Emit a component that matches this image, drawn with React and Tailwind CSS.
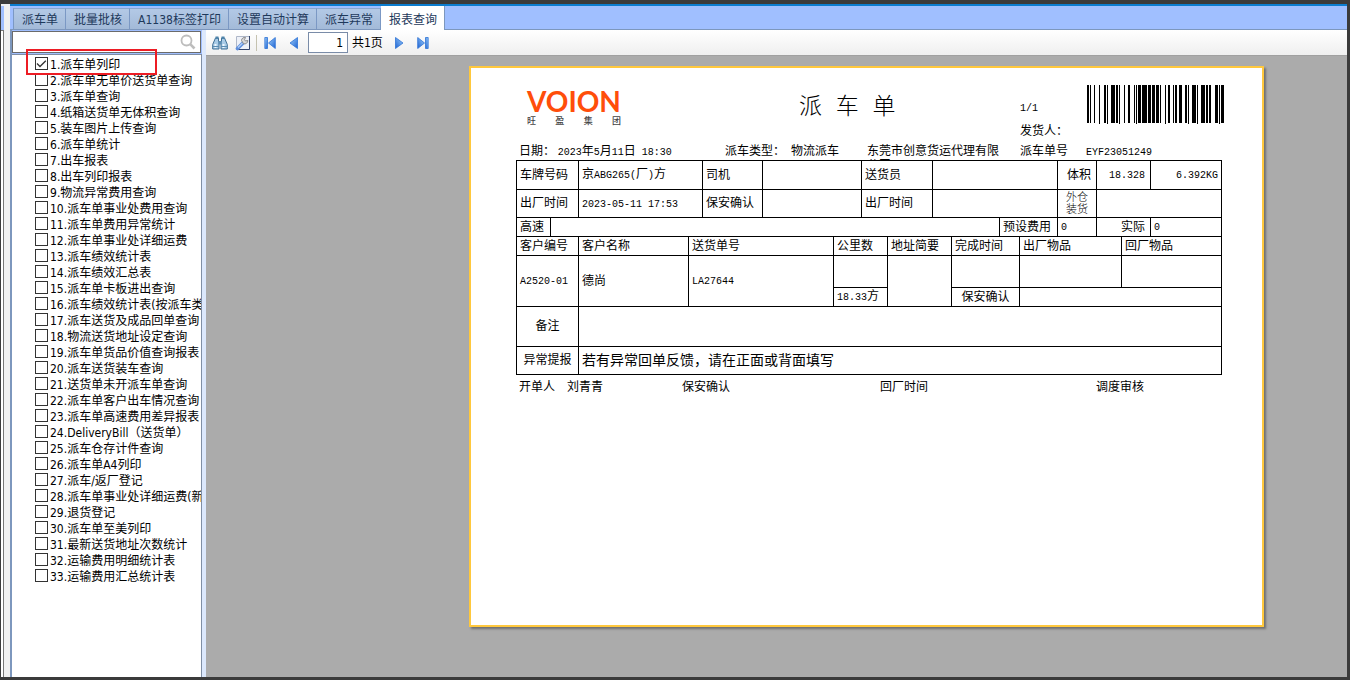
import { useState } from 'react';

const tabs = ['派车单', '批量批核', 'A1138标签打印', '设置自动计算', '派车异常', '报表查询'];

const reports = [
  '派车单列印',
  '派车单无单价送货单查询',
  '派车单查询',
  '纸箱送货单无体积查询',
  '装车图片上传查询',
  '派车单统计',
  '出车报表',
  '出车列印报表',
  '物流异常费用查询',
  '派车单事业处费用查询',
  '派车单费用异常统计',
  '派车单事业处详细运费',
  '派车绩效统计表',
  '派车绩效汇总表',
  '派车单卡板进出查询',
  '派车绩效统计表(按派车类型)',
  '派车送货及成品回单查询',
  '物流送货地址设定查询',
  '派车单货品价值查询报表',
  '派车送货装车查询',
  '送货单未开派车单查询',
  '派车单客户出车情况查询',
  '派车单高速费用差异报表',
  'DeliveryBill（送货单）',
  '派车仓存计件查询',
  '派车单A4列印',
  '派车/返厂登记',
  '派车单事业处详细运费(新)',
  '退货登记',
  '派车单至美列印',
  '最新送货地址次数统计',
  '运输费用明细统计表',
  '运输费用汇总统计表',
];

// [x, width, long]
const bars = [
  [0, 2], [3, 1], [7, 1], [12, 1, 1], [17, 2], [20, 1, 1], [24, 4], [29, 2], [32, 1, 1],
  [37, 1], [41, 2], [47, 1], [49, 1, 1], [51, 3], [55, 5], [61, 3], [65, 3], [69, 3], [73, 1],
  [78, 1, 1], [81, 2], [86, 1], [88, 2], [92, 3], [98, 2], [101, 1, 1], [105, 4], [110, 1, 1],
  [114, 4], [119, 2], [122, 2], [128, 3], [132, 1, 1], [134, 3],
];

const Barcode = () => (
  <svg width="137" height="39" viewBox="0 0 137 39" shapeRendering="crispEdges" aria-hidden="true">
    {bars.map(([x, w, long]) => (
      <rect key={x} x={x} y="0" width={w} height={long ? 39 : 38} />
    ))}
  </svg>
);

const FindIcon = () => (
  <svg width="16" height="16" viewBox="0 0 16 16" aria-hidden="true">
    <path d="M3.5 3h3v3l.5 1v7H.7V9.500z" fill="#a9cbe6" stroke="#3f6f95" />
    <path d="M12.500 3h-3v3L9 7v7h6.300V9.500z" fill="#a9cbe6" stroke="#3f6f95" />
    <path d="M3.500 1.500h3V4h-3zM9.500 1.500h3V4h-3z" fill="#4f83aa" />
    <path d="M6.500 6h3v3.500h-3z" fill="#5c8db2" />
    <path d="M2.500 9h2v4h-2zM10.500 9h2v4h-2z" fill="#eef7fd" />
    <path d="M.7 11.500h6.300M9 11.500h6.300" stroke="#5c8db2" />
  </svg>
);

const SetupIcon = () => (
  <svg width="16" height="16" viewBox="0 0 16 16" aria-hidden="true">
    <path d="M1.500 1.500h13v13h-13z" fill="#eef1f8" stroke="#aeb7c8" />
    <path d="M14.500 1v13.500H3" fill="none" stroke="#34456d" />
    <path d="M8 8L2.500 13.500" stroke="#5f8fdc" strokeWidth="3.600" strokeLinecap="round" />
    <path d="M7.500 8L3 12.500" stroke="#b5d0f8" strokeWidth="1.200" />
    <path d="M6.500 5.500a3.200 3.200 0 0 1 4-3l-1 2.200 1 1.300 2.300-.6a3.200 3.200 0 0 1-4.300 3.300z" fill="#d8d8d8" stroke="#858585" strokeWidth=".9" />
  </svg>
);

const SearchIcon = () => (
  <svg width="16" height="16" viewBox="0 0 16 16" fill="none" stroke="#bdbdbd" aria-hidden="true">
    <circle cx="6.500" cy="6.500" r="5" strokeWidth="1.800" />
    <path d="M10.200 10.200L14.500 14.500" strokeWidth="2.600" />
  </svg>
);

// Navigation arrow, with a stop bar for the first / last page
const Arrow = ({ bar, flip }) => (
  <svg width="12" height="12" viewBox="0 0 12 12" className={flip ? '-scale-x-100' : ''} aria-hidden="true">
    <defs>
      <linearGradient id="arrow" x1="0" y1="0" x2="1" y2="1">
        <stop offset="0" stopColor="#9fd0fb" />
        <stop offset="1" stopColor="#1d62d2" />
      </linearGradient>
    </defs>
    {bar && <path d="M.8.500h2.700v11H.8z" fill="url(#arrow)" stroke="#2f74d6" strokeWidth=".8" />}
    <path d={bar ? 'M11.300.5v11L4.500 6z' : 'M9.500.5v11L2 6z'} fill="url(#arrow)" stroke="#2f74d6" strokeWidth=".8" />
  </svg>
);

// Half-width characters of the report
const N = ({ children }) => <span className="font-['Liberation_Mono',monospace] text-[10px] leading-none">{children}</span>;

const Td = ({ className = '', children, ...rest }) => (
  <td className={`border-r border-b border-black px-[3px] pt-0 pb-[3px] whitespace-nowrap ${className}`} {...rest}>
    {children}
  </td>
);

const Th = ({ children }) => (
  <th className="h-[19px] border-r border-b border-black px-[3px] pt-0 pb-[3px] text-left font-normal whitespace-nowrap">{children}</th>
);

const Cols = ({ widths }) => (
  <colgroup>
    {widths.map((w, i) => (
      <col key={i} style={{ width: w }} />
    ))}
  </colgroup>
);

const tableClass = 'w-full table-fixed border-separate border-spacing-0 border-l border-black';

function Report() {
  return (
    <article className="min-h-[561px] w-[795px] shrink-0 border-2 border-[#ffc83d] bg-white pr-[40px] pl-[45px] font-['Noto_Sans_CJK_SC',sans-serif] text-xs leading-[14px] text-black shadow-[2px_2px_2px_#707070]">
      <header className="grid h-[75px] grid-cols-[283px_221px_67px_1fr] pt-[17px]">
        <div className="ml-[11px] w-[94px] pt-px">
          <div className="font-['Lato',sans-serif] text-[28px] leading-[30px] font-bold text-[#ff4e0a]">VOION</div>
          <div className="flex justify-between text-[9px] leading-[10px] font-medium text-[#444]">
            <span>旺</span>
            <span>盈</span>
            <span>集</span>
            <span>团</span>
          </div>
        </div>
        <h1 className="pt-[9px] font-['Liberation_Mono','Noto_Sans_CJK_SC',monospace] text-[23px] leading-7 font-light">派 车 单</h1>
        <div className="flex flex-col gap-[9px] pt-[14px]">
          <span><N>1/1</N></span>
          <span>发货人：</span>
        </div>
        <Barcode />
      </header>

      <div className="grid h-[17px] grid-cols-[206px_66px_76px_153px_66px_1fr] items-baseline overflow-hidden pl-[3px]">
        <span>
          日期： <N>2023</N>年<N>5</N>月<N>11</N>日<N> 18:30</N>
        </span>
        <span>派车类型：</span>
        <span>物流派车</span>
        <span className="w-[140px]">东莞市创意货运代理有限公司</span>
        <span>派车单号</span>
        <span><N>EYF23051249</N></span>
      </div>

      <table className={`${tableClass} border-t`}>
        <Cols widths={[62, 124, 60, 99, 71, 125, 39, 54, 71]} />
        <tbody>
          <tr>
            <Td className="h-[29px]">车牌号码</Td>
            <Td>京<N>ABG265(</N>厂<N>)</N>方</Td>
            <Td>司机</Td>
            <Td />
            <Td>送货员</Td>
            <Td />
            <Td className="pr-[5px] text-right">体积</Td>
            <Td className="pr-[5px] text-right"><N>18.328</N></Td>
            <Td className="text-right"><N>6.392KG</N></Td>
          </tr>
          <tr>
            <Td className="h-[28px]">出厂时间</Td>
            <Td><N>2023-05-11 17:53</N></Td>
            <Td>保安确认</Td>
            <Td />
            <Td>出厂时间</Td>
            <Td />
            <Td className="text-center text-[11px] leading-[12px] font-light">外仓<br />装货</Td>
            <Td colSpan={2} />
          </tr>
        </tbody>
      </table>

      <table className={tableClass}>
        <Cols widths={[34, 449, 58, 39, 54, 71]} />
        <tbody>
          <tr>
            <Td className="h-[19px]">高速</Td>
            <Td />
            <Td>预设费用</Td>
            <Td><N>0</N></Td>
            <Td className="pr-[5px] text-right">实际</Td>
            <Td><N>0</N></Td>
          </tr>
        </tbody>
      </table>

      <table className={tableClass}>
        <Cols widths={[62, 110, 145, 54, 64, 68, 102, 100]} />
        <thead>
          <tr>
            <Th>客户编号</Th>
            <Th>客户名称</Th>
            <Th>送货单号</Th>
            <Th>公里数</Th>
            <Th>地址简要</Th>
            <Th>完成时间</Th>
            <Th>出厂物品</Th>
            <Th>回厂物品</Th>
          </tr>
        </thead>
        <tbody>
          <tr>
            <Td rowSpan={2}><N>A2520-01</N></Td>
            <Td rowSpan={2}>德尚</Td>
            <Td rowSpan={2}><N>LA27644</N></Td>
            <Td className="h-[32px]" />
            <Td rowSpan={2} />
            <Td />
            <Td />
            <Td />
          </tr>
          <tr>
            <Td className="h-[19px]"><N>18.33</N>方</Td>
            <Td className="text-center">保安确认</Td>
            <Td colSpan={2} />
          </tr>
          <tr>
            <Td className="h-[40px] text-center">备注</Td>
            <Td colSpan={7} />
          </tr>
          <tr>
            <Td className="h-[28px] text-center">异常提报</Td>
            <Td colSpan={7} className="text-[14px] leading-[18px]">若有异常回单反馈，请在正面或背面填写</Td>
          </tr>
        </tbody>
      </table>

      <footer className="grid grid-cols-[48px_115px_198px_216px_1fr] pt-1 pl-[3px]">
        <span>开单人</span>
        <span>刘青青</span>
        <span>保安确认</span>
        <span>回厂时间</span>
        <span>调度审核</span>
      </footer>
    </article>
  );
}

export default function App() {
  const [activeTab, setActiveTab] = useState('报表查询');
  const [checked, setChecked] = useState([0]);
  const [page, setPage] = useState('1');

  const toggle = (i) => {
    setChecked(checked.includes(i) ? checked.filter((c) => c !== i) : [...checked, i]);
  };

  return (
    <div className="flex h-screen overflow-hidden border-t-4 border-r-3 border-b-3 border-l border-[#3b3b3b] bg-[#f0f0f0] font-['DejaVu_Sans_Condensed','Noto_Sans_CJK_SC',sans-serif] text-xs text-black">
      {/* edge of the docked panel */}
      <div className="mt-[2px] flex w-[9px] flex-col">
        <div className="h-6 w-[3px] bg-[#a0bfff]" />
        <div className="w-[3px] flex-1 border-t border-r border-[#777] bg-white" />
      </div>

      <div className="flex min-w-0 flex-1 flex-col border-t-2 border-[#0b7dd0] bg-[#a0bfff]">
        <nav className="flex h-6 shrink-0 items-end border-b border-[#7d97bd] pl-[3px]">
          {tabs.map((tab, i) => (
            <button
              key={tab}
              onClick={() => setActiveTab(tab)}
              className={`border-r pr-[7px] pl-2 whitespace-nowrap text-[#1e395b] ${i === 0 ? 'border-l' : ''} ${
                tab === activeTab
                  ? '-mb-px h-6 border-[#7d97bd] bg-white pt-[3px]'
                  : 'h-[21px] border-t border-[#7b98c4] border-t-[#8aa6cf] bg-linear-to-b from-[#b3c9e6] to-[#a3bad8] pt-px'
              }`}
            >
              {tab}
            </button>
          ))}
        </nav>

        <div className="flex min-h-0 flex-1">
          <aside className="relative flex w-[196px] shrink-0 flex-col border-r-4 border-l-2 border-r-[#dce8fc] border-l-[#7d97bd]">
            <div className="mt-px mr-px flex h-[22px] shrink-0 items-center border border-[#6b6b6b] bg-white pr-1">
              <input type="search" aria-label="查询" className="min-w-0 flex-1 px-1 outline-none" />
              <button aria-label="查询"><SearchIcon /></button>
            </div>
            <ul className="mt-px flex-1 overflow-hidden border-t border-r border-[#7f8ea5] bg-white pt-px pl-[23px]">
              {reports.map((name, i) => (
                <li key={name} className="h-4">
                  <label className="flex h-4 items-start gap-[2px] whitespace-nowrap">
                    <span className="relative mt-px flex h-[13px] w-[13px] shrink-0">
                      <input
                        type="checkbox"
                        checked={checked.includes(i)}
                        onChange={() => toggle(i)}
                        className="h-[13px] w-[13px] appearance-none border border-[#333] bg-white"
                      />
                      {checked.includes(i) && (
                        <svg className="pointer-events-none absolute inset-0" width="13" height="13" viewBox="0 0 13 13" fill="none" aria-hidden="true">
                          <path d="M2 6.500l3 3 5.800-5.800" stroke="#333" strokeWidth="1.300" />
                        </svg>
                      )}
                    </span>
                    <span className="pt-px leading-4">{i + 1}.{name}</span>
                  </label>
                </li>
              ))}
            </ul>
            <div className="pointer-events-none absolute top-[19px] left-[14px] h-[26px] w-[131px] border-2 border-[#ed1c24]" />
          </aside>

          <main className="flex min-w-0 flex-1 flex-col">
            <div className="flex h-[26px] shrink-0 items-center border-b border-[#a0a0a0] bg-linear-to-b from-white to-[#efefef] pl-[6px]">
              <button aria-label="查找"><FindIcon /></button>
              <button aria-label="设置" className="ml-[7px]"><SetupIcon /></button>
              <div className="mx-[5px] h-4 w-px bg-[#c5c2b0]" />
              <button aria-label="首页" className="ml-[2px]"><Arrow bar /></button>
              <button aria-label="上一页" className="ml-3"><Arrow /></button>
              <input
                aria-label="页码"
                value={page}
                onChange={(e) => setPage(e.target.value)}
                className="ml-2 h-[21px] w-[40px] border border-[#7a8ca8] bg-white pr-1 text-right outline-none"
              />
              <span className="ml-1">共1页</span>
              <button aria-label="下一页" className="ml-[10px]"><Arrow flip /></button>
              <button aria-label="末页" className="ml-3"><Arrow bar flip /></button>
            </div>
            <div className="flex flex-1 items-start overflow-hidden bg-[#ababab] pt-[10px] pl-[263px]">
              <Report />
            </div>
          </main>
        </div>
      </div>
    </div>
  );
}
